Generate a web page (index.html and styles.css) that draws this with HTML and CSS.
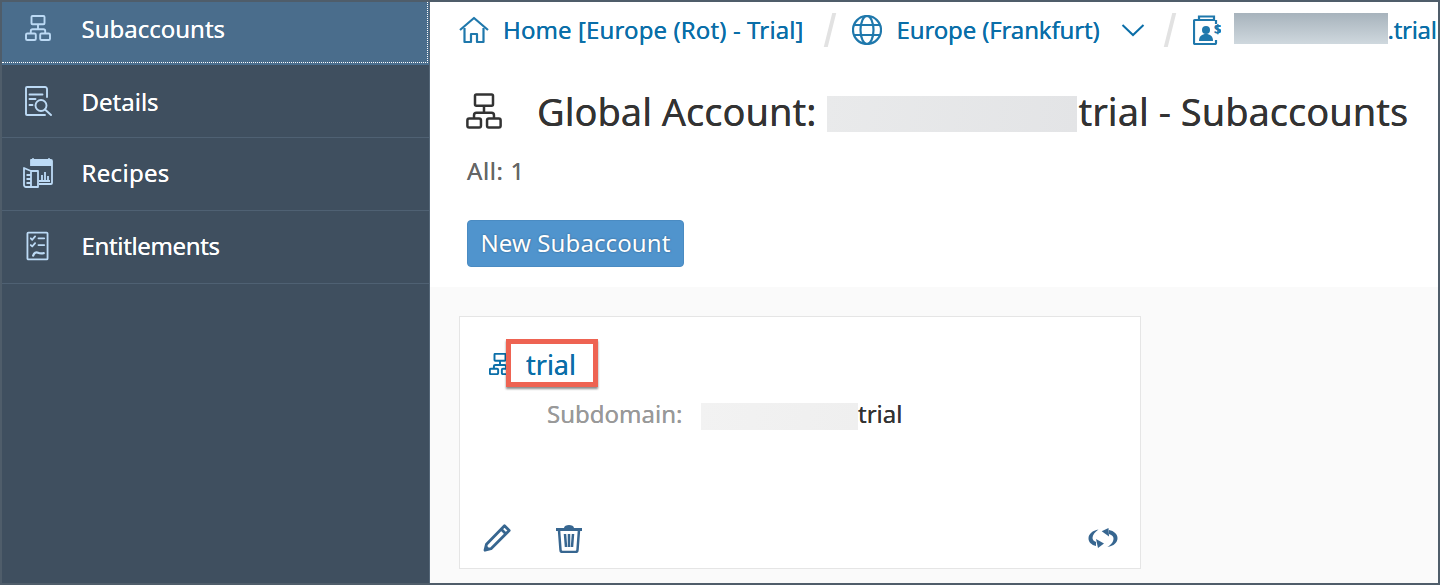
FILE: index.html
```html
<!DOCTYPE html>
<html lang="en">
<head>
<meta charset="utf-8">
<title>Global Account - Subaccounts</title>
<link rel="stylesheet" href="styles.css">
</head>
<body>
<svg class="defs" width="0" height="0">
  <symbol id="org" viewBox="0 0 26 26">
    <g fill="none" stroke="currentColor" stroke-linejoin="round">
      <rect x="6.500" y="1" width="13" height="8.200" rx="1"/>
      <path d="M13 9.200v5M5.800 18.500v-2.500a1.800 1.800 0 0 1 1.800-1.800h10.800a1.800 1.800 0 0 1 1.800 1.800v2.500"/>
      <rect x="1" y="18.500" width="9.800" height="6.500" rx="1.300"/>
      <rect x="15.200" y="18.500" width="9.800" height="6.500" rx="1.300"/>
    </g>
  </symbol>
</svg>
<div class="app">
  <nav class="sidebar">
    <a class="nav-item active">
      <span class="nav-icon"><svg class="ico-org" viewBox="0 0 26 26"><use href="#org"/></svg></span>
      <span>Subaccounts</span>
    </a>
    <a class="nav-item">
      <span class="nav-icon"><svg viewBox="1 0 28 30" class="ico-nav"><g fill="none" stroke="currentColor" stroke-width="1.900" stroke-linecap="round" stroke-linejoin="round"><path d="M23 11V3a2 2 0 0 0-2-2H3a1 1 0 0 0-1 1v26a1 1 0 0 0 1 1h18"/><path d="M5.500 8.500h13M5.500 13h6M5.500 19h3"/><circle cx="17" cy="19.500" r="5.500"/><path d="M21 23.500l6 5.500"/></g></svg></span>
      <span>Details</span>
    </a>
    <a class="nav-item nav-up">
      <span class="nav-icon icon-wide"><svg viewBox="0 0 30 30" class="ico-recipe"><g fill="none" stroke="currentColor" stroke-width="1.800" stroke-linejoin="round"><path d="M8 8V2h20a1 1 0 0 1 1 1v22a1 1 0 0 1-1 1H16"/><path d="M8 5.500h21" stroke-width="5"/><path d="M10 0v3M26 0v3" stroke-width="1.500"/><path d="M1 10l7 3v16H3a2 2 0 0 1-2-2z"/><path d="M8 13h7v16H8"/><path d="M3.500 17H8M3.500 21H8M3.500 25H8M16 23h11M19 23v-6M22 23v-9M25 23v-5"/></g></svg></span>
      <span class="label-recipes">Recipes</span>
    </a>
    <a class="nav-item nav-up">
      <span class="nav-icon"><svg viewBox="0 0 24 30" class="ico-ent"><g fill="none" stroke="currentColor" stroke-width="1.900" stroke-linecap="round" stroke-linejoin="round"><rect x="1.500" y="1" width="21" height="28" rx="1"/><path d="M5 7l1.500 1.500L9.500 5M13 7h6M5 14l1.500 1.500L9.500 12M13 14h6"/><path d="M7.500 25c1-3 3-4 5-3s3 1 6 .5" stroke-width="2.400"/></g></svg></span>
      <span class="label-ent">Entitlements</span>
    </a>
  </nav>
  <main class="main">
    <header class="header">
      <div class="crumbs">
        <svg class="crumb-icon home" viewBox="0 0 30 28"><g fill="none" stroke="currentColor" stroke-width="2.200" stroke-linejoin="round"><path d="M1 14L15 2l14 12"/><path d="M5.500 12v14h6.500v-8h6v8h6.500V12"/></g></svg>
        <a class="crumb-link link-home">Home [Europe (Rot) - Trial]</a>
        <span class="slash"></span>
        <svg class="crumb-icon globe" viewBox="0 0 30 30"><g fill="none" stroke="currentColor" stroke-width="2.200"><circle cx="15" cy="15" r="14"/><ellipse cx="15" cy="15" rx="6.500" ry="14"/><path d="M2 10h26M2 20h26"/></g></svg>
        <a class="crumb-link link-region">Europe (Frankfurt)</a>
        <svg class="chevron" viewBox="0 0 24 14"><path d="M1.500 2l10.500 10L22.500 2" fill="none" stroke="currentColor" stroke-width="2"/></svg>
        <span class="slash second"></span>
        <svg class="crumb-icon account" viewBox="0 0 28 30"><g fill="none" stroke="currentColor" stroke-width="2.200"><path d="M6 5V1.500h15V5"/><path d="M22 5H2a1 1 0 0 0-1 1v22a1 1 0 0 0 1 1h20a1 1 0 0 0 1-1v-3M23 5v4"/></g><circle cx="13" cy="15" r="4" fill="currentColor"/><path d="M6 26c0-5 3-7 7-7s7 2 7 7z" fill="currentColor"/><text x="21" y="19" class="dollar">$</text></svg>
        <span class="redact redact-crumb"></span>
        <a class="crumb-link link-last">.trial</a>
      </div>
      <h1 class="title">
        <svg class="title-icon" viewBox="0 0 26 26"><use href="#org"/></svg>
        <span>Global Account:</span>
        <span class="redact redact-title"></span>
        <span>trial - Subaccounts</span>
      </h1>
      <div class="count">All: 1</div>
      <button class="primary" type="button">New Subaccount</button>
    </header>
    <section class="content">
      <article class="card">
        <div class="card-head">
          <svg class="card-icon" viewBox="0 0 26 26"><use href="#org"/></svg>
          <a class="card-title">trial</a>
          <span class="callout"></span>
        </div>
        <div class="card-row">
          <span class="label">Subdomain:</span>
          <span class="redact redact-sub"></span>
          <span class="value">trial</span>
        </div>
        <div class="card-actions">
          <svg class="pencil" viewBox="0 0 28 28"><path d="M21.500 1.800l4.700 4.700L8 24.700l-6 1.500 1.500-6zM18.500 5.500l4.500 4.500" fill="none" stroke="currentColor" stroke-width="2.800" stroke-linejoin="round"/><path d="M1 27l2-6 4 4z" fill="currentColor"/></svg>
          <svg class="trash" viewBox="0 0 28 30"><path d="M1 6.500h26" stroke="currentColor" stroke-width="3"/><path d="M9 5c0-4 10-4 10 0z" fill="currentColor"/><path d="M4 7l1.500 20a2 2 0 0 0 2 2h13a2 2 0 0 0 2-2L24 7M10 11l1 13M14 11v13M18 11l-1 13" fill="none" stroke="currentColor" stroke-width="2.500"/></svg>
          <svg class="sync" viewBox="0 0 30 20"><path d="M10.500 1.500C4.500 2.500.5 6 .5 10.500c0 3.500 3 6.500 7.500 7.500v-4c-2-1-3.500-2-3.500-4 0-3 2.500-6 6-8.500z" fill="currentColor"/><path d="M16 15.500L8 11l2 9z" fill="currentColor"/><path d="M19.300 19c6.700-1 10.200-4.500 10.200-9 0-4-3.500-7-8.500-8v4c3.500 1 4.500 3 4.500 4.500 0 3.500-2.500 6.500-6.200 8.500z" fill="currentColor"/><path d="M13.700 3.300L20.500 0l.5 8.500z" fill="currentColor"/></svg>
        </div>
      </article>
    </section>
  </main>
</div>
</body>
</html>
```
FILE: styles.css
```css
* { box-sizing: border-box; }
html, body { margin: 0; padding: 0; }
body { font-family: "Noto Sans", "Liberation Sans", sans-serif; background: #4f5d6a; }
.defs { position: absolute; }
.app {
  width: 1440px;
  height: 585px;
  border: 2px solid #4f5d6a;
  display: flex;
  overflow: hidden;
}
.sidebar {
  width: 428px;
  flex: none;
  background: #3f4f5f;
  border-right: 1px solid #556778;
  display: flex;
  flex-direction: column;
}
.nav-item {
  height: 73px;
  flex: none;
  display: flex;
  align-items: center;
  color: #fff;
  font-size: 24px;
  text-shadow: 0 0 .6px #fff;
  border-bottom: 1px solid #4f6173;
  padding-left: 16px;
}
.nav-up { padding-bottom: 3px; }
.label-recipes { letter-spacing: .3px; }
.label-ent { letter-spacing: -.35px; }
.nav-item.active {
  position: relative;
  height: 63px;
  padding-bottom: 11px;
  background: #4a6d8c;
  border-bottom: 0;
}
.nav-item.active::after {
  content: "";
  position: absolute;
  left: 0;
  right: 1px;
  top: 0;
  bottom: 2px;
  border-right: 1px dotted #fff;
  border-bottom: 1px dotted #fff;
}
.nav-icon {
  width: 63.5px;
  flex: none;
  display: flex;
  color: #bcdaf5;
  padding-left: 7px;
}
.nav-icon svg { display: block; }
.icon-wide { padding-left: 5px; }
.ico-org { width: 26px; height: 26px; stroke-width: 1.9; }
.ico-nav { width: 28px; height: 30px; }
.ico-recipe { width: 30px; height: 30px; }
.ico-ent { width: 23px; height: 30px; margin-left: 1px; }
.main {
  flex: 1;
  min-width: 0;
  display: flex;
  flex-direction: column;
  background: #fafafa;
}
.header {
  height: 285px;
  flex: none;
  background: #fff;
  padding: 0 0 0 29px;
  overflow: hidden;
}
.crumbs {
  height: 55px;
  display: flex;
  align-items: center;
  color: #0a6ea8;
  white-space: nowrap;
  font-size: 24px;
  text-shadow: 0 0 .5px #0a6ea8;
}
.crumb-link { color: #0a6ea8; }
.link-home { letter-spacing: .11px; }
.link-region { letter-spacing: -.15px; }
.link-last { letter-spacing: -.3px; }
.crumb-icon { flex: none; color: #1f78ac; }
.home { width: 30px; height: 28px; margin-right: 14px; }
.globe { width: 30px; height: 30px; margin-right: 15px; }
.account { width: 28px; height: 30px; margin-right: 13px; }
.chevron { width: 24px; height: 14px; margin-left: 21px; flex: none; }
.slash {
  width: 4px;
  height: 34px;
  margin: 0 20px 0 24px;
  background: #e2e2e2;
  transform: skewX(-14deg);
  flex: none;
}
.slash.second { margin: 0 21px 0 23px; }
.dollar { font-size: 13px; font-weight: 700; fill: currentColor; font-family: "Noto Sans", sans-serif; }
.redact { display: inline-block; flex: none; }
.redact-crumb {
  width: 154px;
  height: 31px;
  margin-bottom: 2px;
  background: linear-gradient(#a7b3bc, #cfd8de);
}
.title {
  margin: 32px 0 0 7px;
  height: 44px;
  display: flex;
  align-items: center;
  font-size: 38px;
  font-weight: 400;
  color: #333;
  white-space: nowrap;
  text-shadow: 0 0 .5px #333;
}
.title-icon { width: 36px; height: 36px; margin-right: 35px; flex: none; stroke-width: 1.8; }
.redact-title {
  width: 250px;
  height: 36px;
  margin: 6px 1px 0 11px;
  background: linear-gradient(100deg, #e9eaeb, #e3e4e6);
}
.count {
  margin: 22px 0 0 8px;
  font-size: 24px;
  line-height: 32px;
  letter-spacing: .6px;
  color: #666;
  text-shadow: 0 0 .5px #666;
}
.primary {
  display: block;
  margin: 33px 0 0 8px;
  width: 217px;
  height: 47px;
  padding: 0 0 2px;
  background: #5094cd;
  border: 1px solid #4a8bc2;
  border-radius: 4px;
  color: #fff;
  font: 24px "Noto Sans", "Liberation Sans", sans-serif;
  letter-spacing: .1px;
  text-shadow: 0 0 2px #2c5a80;
}
.content { flex: 1; padding: 29px 0 0 29px; }
.card {
  width: 682px;
  height: 253px;
  background: #fff;
  border: 1px solid #e5e5e5;
  display: flex;
  flex-direction: column;
  padding: 0 22px 0 23px;
}
.card-head {
  position: relative;
  height: 30px;
  margin-top: 32px;
  display: flex;
  align-items: center;
}
.card-icon { width: 22px; height: 22px; color: #0a6ea8; flex: none; margin: 0 15px 0 6px; stroke-width: 2.300; }
.card-title { font-size: 27px; color: #0a6ea8; text-shadow: 0 0 .5px #0a6ea8; }
.callout {
  position: absolute;
  left: 23px;
  top: -10px;
  width: 92px;
  height: 48px;
  border: 5px solid #ee6352;
  box-shadow: 0 2px 2px rgba(0, 0, 0, .45);
}
.card-row {
  margin: 19px 0 0 64px;
  height: 30px;
  display: flex;
  align-items: center;
  font-size: 24px;
}
.label { color: #999; width: 154px; flex: none; text-shadow: 0 0 .5px #999; }
.redact-sub {
  width: 157px;
  height: 27px;
  margin-top: 6px;
  background: linear-gradient(100deg, #f2f2f2, #efefef);
}
.value { color: #333; text-shadow: 0 0 .5px #333; }
.card-actions {
  margin-top: auto;
  margin-bottom: 6px;
  height: 48px;
  display: flex;
  align-items: center;
  color: #376690;
}
.pencil { width: 28px; height: 28px; flex: none; }
.trash { width: 28px; height: 30px; margin-left: 44px; flex: none; }
.sync { width: 30px; height: 20px; margin-left: auto; flex: none; }
```
